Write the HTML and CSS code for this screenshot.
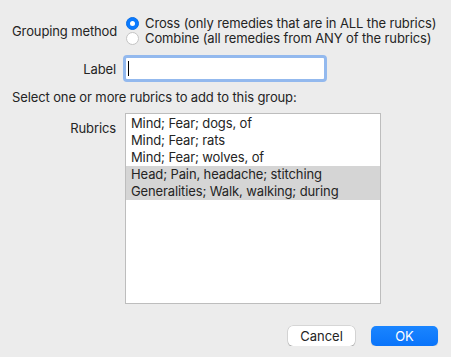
FILE: index.html
```html
<!DOCTYPE html>
<html lang="en">
<head>
    <meta charset="UTF-8">
    <title>Rubric Group</title>
    <link rel="stylesheet" href="styles.css">
</head>
<body>
    <div class="dialog">
        <!-- Grouping method -->
        <div class="row row-method">
            <span class="field-label">Grouping method</span>
            <div class="radios">
                <label class="radio"><span class="dot checked"></span>Cross (only remedies that are in ALL the rubrics)</label>
                <label class="radio"><span class="dot"></span>Combine (all remedies from ANY of the rubrics)</label>
            </div>
        </div>

        <!-- Label -->
        <div class="row row-label">
            <span class="field-label">Label</span>
            <div class="input-ring"><div class="input"><span class="caret"></span></div></div>
        </div>

        <p class="hint">Select one or more rubrics to add to this group:</p>

        <!-- Rubrics -->
        <div class="row row-rubrics">
            <span class="field-label">Rubrics</span>
            <ul class="list">
                <li>Mind; Fear; dogs, of</li>
                <li>Mind; Fear; rats</li>
                <li>Mind; Fear; wolves, of</li>
                <li class="selected">Head; Pain, headache; stitching</li>
                <li class="selected">Generalities; Walk, walking; during</li>
            </ul>
        </div>

        <div class="buttons">
            <button class="btn">Cancel</button>
            <button class="btn btn-default">OK</button>
        </div>
    </div>
</body>
</html>
```

FILE: styles.css
```css
/* Dialog base */
body {
    margin: 0;
    background: #ececec;
    font-family: Inter, "Liberation Sans", Arial, sans-serif;
    font-size: 13px;
    letter-spacing: -0.12px;
    color: #242424;
}

.dialog {
    padding: 16px 13px 0 12px;
}

/* Two column rows: right aligned label, control */
.row {
    display: flex;
    align-items: flex-start;
}

.field-label {
    width: 104px;
    text-align: right;
    flex-shrink: 0;
    white-space: nowrap;
}

.row-method .field-label {
    padding-top: 7px;
}

/* Radio buttons */
.radios {
    margin-left: 10px;
}

.radio {
    display: flex;
    align-items: center;
    height: 15px;
    line-height: 15px;
    white-space: nowrap;
}

.dot {
    width: 13px;
    height: 13px;
    box-sizing: border-box;
    border-radius: 50%;
    border: 1px solid #c4c4c4;
    background: #fff;
    margin-right: 6px;
    position: relative;
}

.dot.checked {
    background: #0a7aff;
    border-color: #0a6ee6;
}

.dot.checked::after {
    content: "";
    position: absolute;
    left: 3px;
    top: 3px;
    width: 5px;
    height: 5px;
    border-radius: 50%;
    background: #fff;
}

/* Label input with focus ring */
.row-label {
    margin-top: 9px;
    align-items: center;
}

.input-ring {
    margin-left: 7px;
    width: 204px;
    height: 27px;
    box-sizing: border-box;
    border: 3px solid #93b9ee;
    border-radius: 4px;
    background: #fff;
    padding: 3px 2px;
}

.caret {
    display: block;
    width: 1px;
    height: 15px;
    background: #000;
}

.hint {
    margin: 8px 0 0;
    line-height: 15px;
}

/* Rubric list */
.row-rubrics {
    margin-top: 8px;
}

.row-rubrics .field-label {
    padding-top: 7px;
}

.list {
    list-style: none;
    margin: 0 0 0 9px;
    padding: 1px 0 0;
    width: 256px;
    height: 191px;
    box-sizing: border-box;
    border: 1px solid #bdbdbd;
    background: #fff;
}

.list li {
    height: 17px;
    line-height: 17px;
    padding-left: 5px;
}

.list li.selected {
    background: #d5d5d5;
}

/* Footer buttons */
.buttons {
    display: flex;
    justify-content: flex-end;
    gap: 16px;
    margin-top: 22px;
}

.btn {
    width: 67px;
    height: 20px;
    padding: 0;
    border: none;
    border-radius: 5px;
    background: #fff;
    font-family: Inter, "Liberation Sans", Arial, sans-serif;
    font-size: 13px;
    color: #242424;
    box-shadow: 0 0 0 0.5px rgba(0, 0, 0, 0.18), 0 1px 1px rgba(0, 0, 0, 0.18);
}

.btn-default {
    background: linear-gradient(#1a85ff, #0a74fa);
    color: #fff;
    box-shadow: 0 1px 1px rgba(0, 0, 0, 0.15);
}
```
